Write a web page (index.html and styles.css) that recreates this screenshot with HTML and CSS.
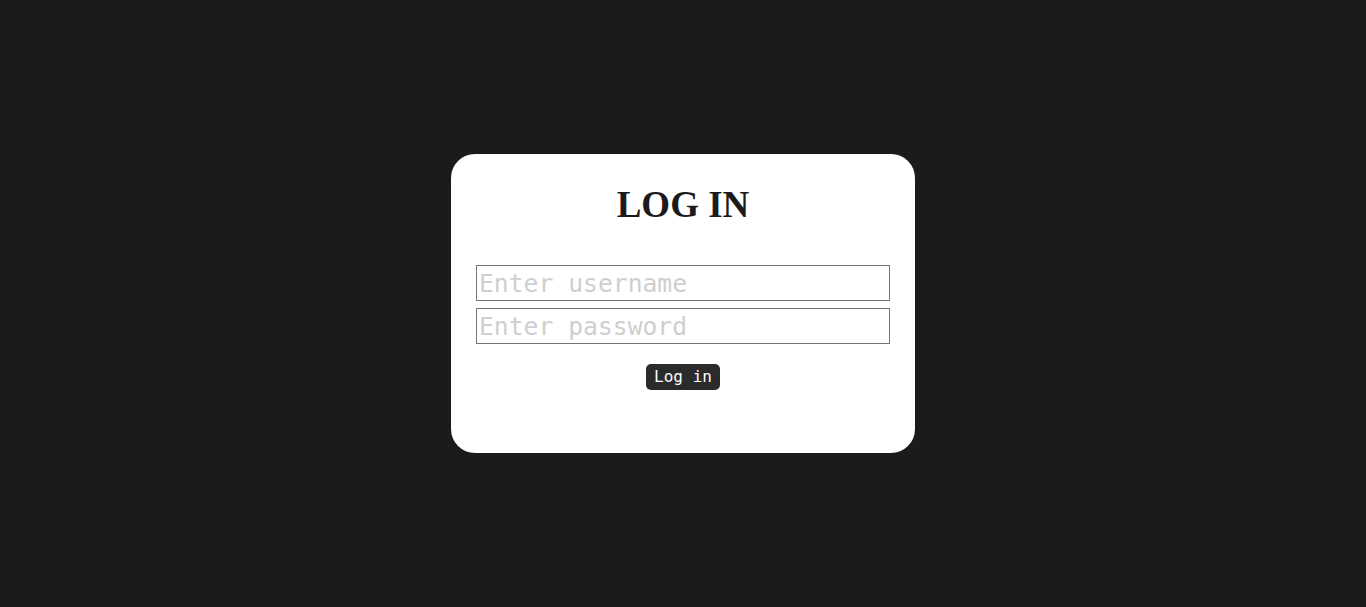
FILE: index.html
```html
<!DOCTYPE html>
<html>
<head>
<meta charset="utf-8">
<link rel="stylesheet" href="styles.css">
</head>
<body>
<div class="page">
  <form class="card">
    <h1 class="title">LOG IN</h1>
    <input class="field" type="text" placeholder="Enter username">
    <input class="field" type="password" placeholder="Enter password">
    <button class="btn" type="button">Log in</button>
  </form>
</div>
</body>
</html>
```
FILE: styles.css
```css
html, body {
  margin: 0;
  padding: 0;
  height: 100%;
  background: #1b1b1b;
}
.page {
  height: 100%;
  display: flex;
  align-items: center;
  justify-content: center;
}
.card {
  box-sizing: border-box;
  width: 464px;
  height: 299px;
  background: #fff;
  border-radius: 24px;
  padding: 30px 25px 0;
  display: flex;
  flex-direction: column;
  align-items: center;
}
.title {
  margin: 0 0 39px;
  font-family: "Liberation Serif", serif;
  font-weight: bold;
  font-size: 37px;
  line-height: 42px;
  color: #1b1b1b;
}
.field {
  box-sizing: border-box;
  width: 414px;
  height: 36px;
  margin: 0 0 7px;
  padding: 0 2px;
  border: 1px solid #767676;
  border-radius: 0;
  font-family: "DejaVu Sans Mono", monospace;
  font-size: 24.7px;
  color: #222;
  background: #fff;
}
.field::placeholder {
  color: #cfcfcf;
}
.btn {
  margin-top: 13px;
  height: 26px;
  padding: 0 8px;
  border: none;
  border-radius: 5px;
  background: #2b2b2b;
  color: #fff;
  font-family: "DejaVu Sans Mono", monospace;
  font-size: 16px;
  line-height: 26px;
}
```
